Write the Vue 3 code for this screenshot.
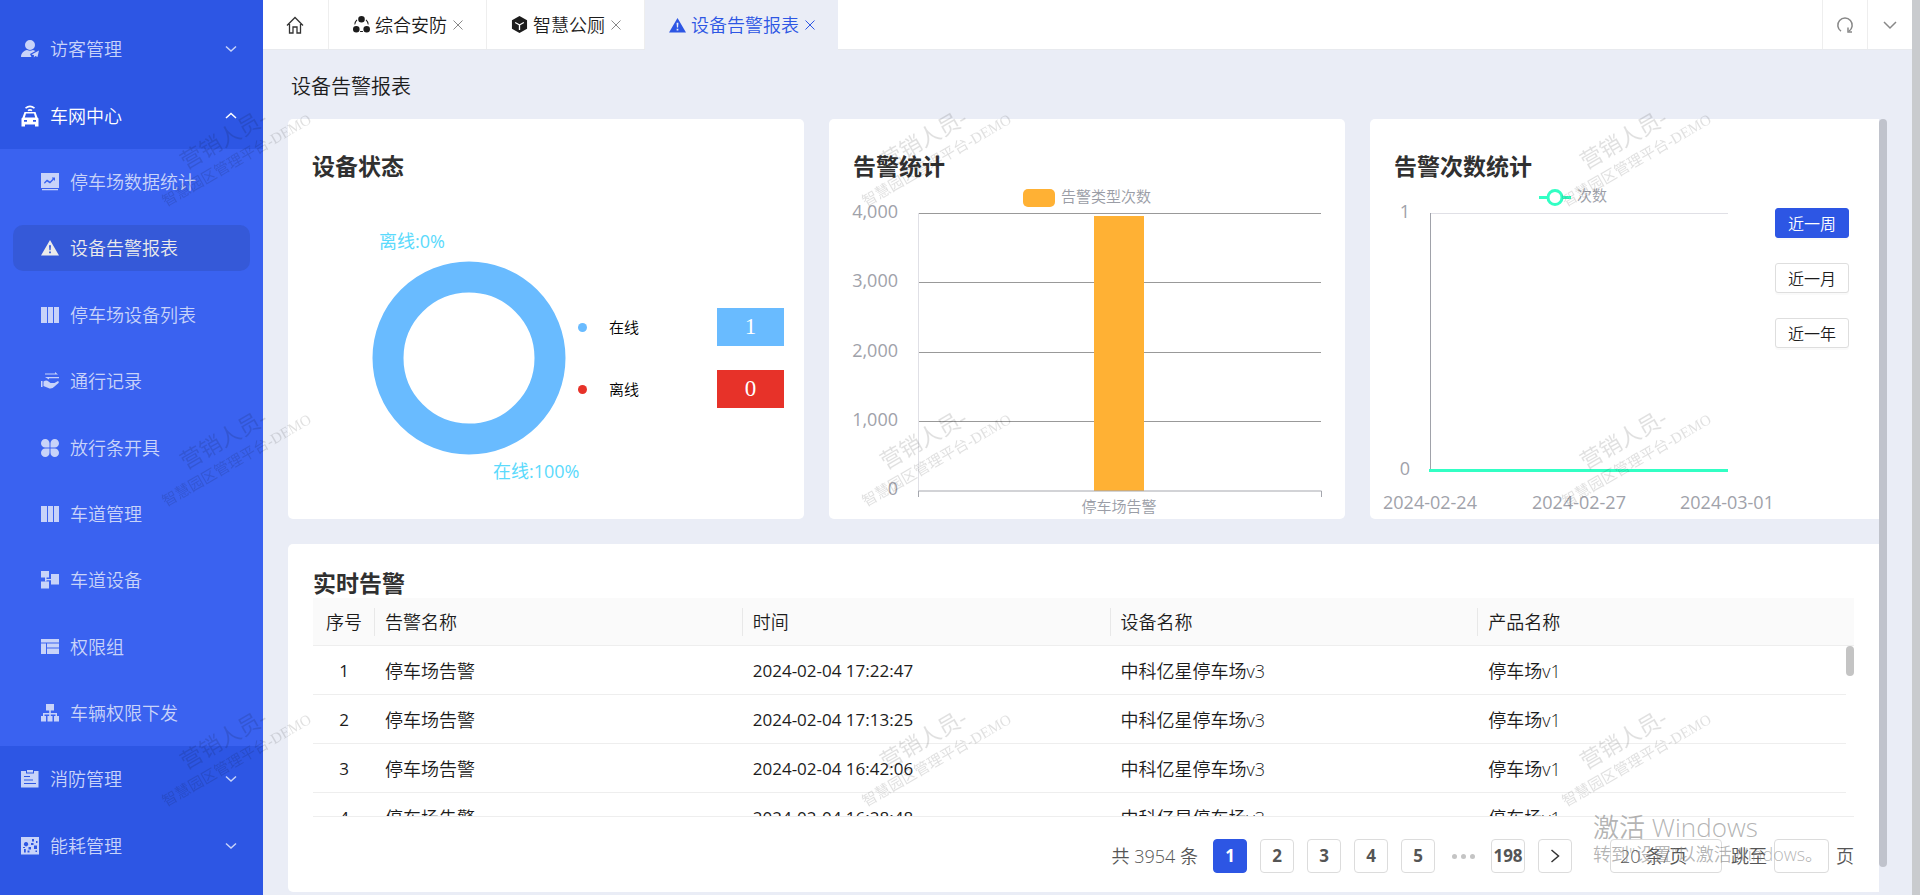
<script setup>
import { ref } from 'vue'

const icons = {
  visitor: 'M9 0a5 5 0 1 1 0 10a5 5 0 1 1 0-10z M0 17c0-4 3-6.500 6-7q3 1.500 6 0l2.500 1l-5.500 3l1.500 3z M18 10.500l-7.500 4l2.500.7l-.2 2.300l1.500-1.500l2.200 1z',
  car: 'M4 .5q5-4 10 0l-1 1.300q-4-3-8 0z M6.500 3q2.500-2 5 0l-1 1.300q-1.500-1.200-3 0z M3.500 5h11l2 5.500l1 1v8h-3.500v-2h-10v2h-3.500v-8l1-1z M5 6.500l-1.200 4h10.400l-1.200-4z M3 13v1.800h3v-1.800z M12 13v1.800h3v-1.800z',
  trend: 'M0 0h18v15h-18z M3 9.500l3-3l3 2l3-3h-1v-1h3v3h-1v-1l-4 4l-3-2l-2.300 2.200z M1 16h16v1.300h-16z',
  alert: 'M9 1l9 15.500h-18z M8 6.200h2l-.4 5h-1.200z M8.100 12.500h1.800v1.800h-1.800z',
  columns: 'M0 1h6v16h-6z M7 1h5v16h-5z M13 1h5v16h-5z',
  hand: 'M4 1.500h10v-1.500l3 2.500h-13z M5 5h13v1.200h-10v1.300l-4-2.500z M0 9h1.500v6h-1.500z M2.500 9.500q3-2 5 0l2 1.500h4l3.500-2q1.500 1 .5 2l-4 3.500q-2 2.500-5 2l-6-2.500z',
  clover: 'M4.250 0a4.250 4.250 0 0 1 4.250 4.250v4.250h-4.250a4.250 4.250 0 0 1 0-8.500z M13.750 0a4.250 4.250 0 0 1 0 8.500h-4.250v-4.250a4.250 4.250 0 0 1 4.250-4.250z M4.250 9.500h4.250v4.250a4.250 4.250 0 1 1-4.250-4.250z M9.500 9.500h4.250a4.250 4.250 0 1 1-4.250 4.250z',
  device: 'M0 0h8v6.500h-8z M10 3h8v10.500h-8z M0 10.500h8v7h-8z M4 6.500h1.500v1.500h4.500v1.300h-4.500v1.500h-1.500z',
  group: 'M0 1h18v3.500h-18z M0 5.500h5v10.500h-5z M6 5.500h12v4h-12z M6 10.500h12v5.500h-12z',
  tree: 'M5 0h8v6.500h-3.200v2.500h6.200v3h2v5.500h-5v-5.500h1.500v-1.500h-4.700v1.500h1.700v5.500h-5v-5.500h1.700v-1.500h-4.700v1.500h1.500v5.500h-5v-5.500h2v-3h6.200v-2.500h-3.200z',
  clipboard: 'M0 1h5v2.500h8v-2.500h4.500v16.500h-17.500z M6 0h6v2.500h-6z M3 6v1h6v-1z M3 9.500v1h9v-1z M3 13v1h12v-1z',
  energy: 'M0 0h18v17.500h-18z M5 5a2.200 2.200 0 1 0 .1 0z M11 2v2.500h2v-2.500z M15 4v2h1.500v-2z M10 6v2h2.500v-2z M13 8.500v3.500h3v-3.500z M7.500 10v2.500h2.500v-2.500z M3 12v3.500h1.800v-3.500z M6.500 13.500v2h2v-2z M2 10v1h2v-1z M14.500 13.500v1.500h1.500v-1.500z',
  trio: 'M9 0a3.500 3.500 0 1 1 0 7a3.500 3.500 0 1 1 0-7z M3.500 10.500a3.500 3.500 0 1 1 0 7a3.500 3.500 0 1 1 0-7z M14.500 10.500a3.500 3.500 0 1 1 0 7a3.500 3.500 0 1 1 0-7z M3.800 3.700l.8.700q-2 2-2.300 4.600h-.9q.3-3.500 2.400-5.300z M14.200 3.700l-.8.700q2 2 2.300 4.600h.9q-.3-3.500-2.400-5.300z M7.500 16h3v1h-3z',
  cube: 'M9 0l8 4.500v9l-8 4.500l-8-4.500v-9z M4.700 6.400l-.6 1.100l4.200 2.400v4.800h1.400v-4.800l4.200-2.400l-.6-1.100l-4.300 2.400z'
}

const menuTop = [{ icon: 'visitor', label: '访客管理' }]
const menuBottom = [
  { icon: 'clipboard', label: '消防管理' },
  { icon: 'energy', label: '能耗管理' }
]
const submenu = [
  { icon: 'trend', label: '停车场数据统计' },
  { icon: 'alert', label: '设备告警报表' },
  { icon: 'columns', label: '停车场设备列表' },
  { icon: 'hand', label: '通行记录' },
  { icon: 'clover', label: '放行条开具' },
  { icon: 'columns', label: '车道管理' },
  { icon: 'device', label: '车道设备' },
  { icon: 'group', label: '权限组' },
  { icon: 'tree', label: '车辆权限下发' }
]
const activeItem = ref('设备告警报表')

const tabs = [
  { icon: 'trio', label: '综合安防' },
  { icon: 'cube', label: '智慧公厕' },
  { icon: 'alert', label: '设备告警报表' }
]

const yTicks = [
  { label: '4,000', y: 32 },
  { label: '3,000', y: 101 },
  { label: '2,000', y: 171 },
  { label: '1,000', y: 240 }
]
const dates = [
  { label: '2024-02-24', x: 60 },
  { label: '2024-02-27', x: 209 },
  { label: '2024-03-01', x: 357 }
]

const ranges = ['近一周', '近一月', '近一年']
const range = ref('近一周')

const rows = [
  { id: 1, time: '2024-02-04 17:22:47' },
  { id: 2, time: '2024-02-04 17:13:25' },
  { id: 3, time: '2024-02-04 16:42:06' },
  { id: 4, time: '2024-02-04 16:28:48' }
]
const page = ref(1)
const pageSize = ref('20')
const jump = ref('')
</script>

<template>
  <div class="layout">
    <nav class="sidebar" aria-label="主菜单">
      <a v-for="m in menuTop" :key="m.label" href="#" class="menu-item">
        <svg class="icon" viewBox="0 0 18 18"><path :d="icons[m.icon]" fill-rule="evenodd" /></svg>
        <span>{{ m.label }}</span>
        <svg class="chevron" viewBox="0 0 12 8"><path d="M1 1.500l5 4.500l5-4.500" /></svg>
      </a>
      <a href="#" class="menu-item open">
        <svg class="icon" viewBox="0 0 18 18"><path :d="icons.car" fill-rule="evenodd" /></svg>
        <span>车网中心</span>
        <svg class="chevron" viewBox="0 0 12 8"><path d="M1 6l5-4.500l5 4.500" /></svg>
      </a>
      <div class="submenu">
        <div v-for="s in submenu" :key="s.label" class="sub-row">
          <a href="#" class="sub-item" :class="{ active: s.label === activeItem }" @click.prevent="activeItem = s.label">
            <svg class="icon" viewBox="0 0 18 18"><path :d="icons[s.icon]" fill-rule="evenodd" /></svg>
            <span>{{ s.label }}</span>
          </a>
        </div>
      </div>
      <a v-for="m in menuBottom" :key="m.label" href="#" class="menu-item">
        <svg class="icon" viewBox="0 0 18 18"><path :d="icons[m.icon]" fill-rule="evenodd" /></svg>
        <span>{{ m.label }}</span>
        <svg class="chevron" viewBox="0 0 12 8"><path d="M1 1.500l5 4.500l5-4.500" /></svg>
      </a>
    </nav>

    <div class="page">
      <header class="tabs">
        <a href="#" class="tab home" aria-label="首页">
          <svg class="line-icon" viewBox="0 0 18 18"><path d="M1 9.500l8-8l8 8M3.500 8v9h3.500v-6h4v6h3.500v-9" /></svg>
        </a>
        <div v-for="(t, i) in tabs" :key="t.label" class="tab" :class="{ current: i === 2 }">
          <svg class="icon tab-icon" viewBox="0 0 18 18"><path :d="icons[t.icon]" fill-rule="evenodd" /></svg>
          <a href="#">{{ t.label }}</a>
          <button type="button" class="close" aria-label="关闭">
            <svg viewBox="0 0 12 12"><path d="M1.500 1.500l9 9M10.500 1.500l-9 9" /></svg>
          </button>
        </div>
        <div class="tools">
          <button type="button" aria-label="刷新">
            <svg class="tool-icon" viewBox="0 0 18 18"><path d="M5 15.200a7.200 7.200 0 1 1 8 0" /><path d="M12 11.500v4.500h4" /></svg>
          </button>
          <button type="button" aria-label="更多">
            <svg class="tool-icon" viewBox="0 0 18 18"><path d="M3 6l6 6l6-6" /></svg>
          </button>
        </div>
      </header>

      <h1 class="page-title">设备告警报表</h1>

      <div class="scroll-area">
        <main class="content">
          <div class="cards">
            <section class="card">
              <h2>设备状态</h2>
              <div class="card-body">
                <svg class="donut" viewBox="0 0 290 338">
                  <circle cx="181" cy="177" r="81" fill="none" stroke="#69bbff" stroke-width="31" />
                  <text x="91" y="67" class="donut-label">离线:0%</text>
                  <text x="205" y="297" class="donut-label">在线:100%</text>
                </svg>
                <ul class="legend">
                  <li><i class="dot online"></i><span>在线</span><b class="online">1</b></li>
                  <li><i class="dot offline"></i><span>离线</span><b class="offline">0</b></li>
                </ul>
              </div>
            </section>

            <section class="card">
              <h2>告警统计</h2>
              <div class="card-body">
                <svg class="chart" viewBox="0 0 516 338">
                  <rect x="194" y="8" width="32" height="18" rx="5" fill="#ffb134" />
                  <text x="232" y="21" class="small-label">告警类型次数</text>
                  <path d="M89.500 32v278" stroke="#e0e0e6" />
                  <g v-for="t in yTicks" :key="t.label">
                    <path :d="`M90 ${t.y + 0.5}h402`" stroke="#999" />
                    <text x="69" :y="t.y + 5" class="axis-label" text-anchor="end">{{ t.label }}</text>
                  </g>
                  <text x="69" y="314" class="axis-label" text-anchor="end">0</text>
                  <rect x="265" y="35" width="50" height="275" fill="#ffb134" />
                  <path d="M89.500 316v-6h403v6" fill="none" stroke="#a5a7ae" />
                  <text x="290" y="331" class="small-label" text-anchor="middle">停车场告警</text>
                </svg>
              </div>
            </section>

            <section class="card">
              <h2>告警次数统计</h2>
              <div class="card-body">
                <svg class="chart" viewBox="0 0 405 338">
                  <path d="M60 32.500h298" stroke="#e0e0e6" />
                  <path d="M60.500 32v257" stroke="#a0a2aa" />
                  <path d="M59 289.500h299" stroke="#32ffc4" stroke-width="3" />
                  <path d="M169 16.500h32" stroke="#32ffc4" stroke-width="3" />
                  <circle cx="185" cy="16.500" r="7" fill="#fff" stroke="#32ffc4" stroke-width="3" />
                  <text x="207" y="20" class="small-label">次数</text>
                  <text x="40" y="37" class="axis-label" text-anchor="end">1</text>
                  <text x="40" y="294" class="axis-label" text-anchor="end">0</text>
                  <text v-for="d in dates" :key="d.label" :x="d.x" y="328" class="axis-label" text-anchor="middle">{{ d.label }}</text>
                </svg>
                <div class="ranges">
                  <button v-for="r in ranges" :key="r" type="button" :class="{ on: r === range }" @click="range = r">{{ r }}</button>
                </div>
              </div>
            </section>
          </div>

          <section class="card table-card">
            <h2>实时告警</h2>
            <div class="table-wrap">
              <table>
                <colgroup><col class="c-no" /><col /><col /><col /><col /><col class="c-gutter" /></colgroup>
                <thead>
                  <tr><th class="no">序号</th><th>告警名称</th><th>时间</th><th>设备名称</th><th class="last">产品名称</th><th class="last"></th></tr>
                </thead>
                <tbody>
                  <tr v-for="r in rows" :key="r.id">
                    <td class="no">{{ r.id }}</td>
                    <td>停车场告警</td>
                    <td class="time">{{ r.time }}</td>
                    <td>中科亿星停车场v3</td>
                    <td>停车场v1</td>
                  </tr>
                </tbody>
              </table>
              <div class="table-thumb"></div>
            </div>
            <div class="pagination">
              <span class="total">共 3954 条</span>
              <button v-for="n in 5" :key="n" type="button" :class="{ on: n === page }" @click="page = n">{{ n }}</button>
              <span class="dots"><i></i><i></i><i></i></span>
              <button type="button">198</button>
              <button type="button" aria-label="下一页">
                <svg class="next" viewBox="0 0 12 16"><path d="M2.500 2l7 6l-7 6" /></svg>
              </button>
              <select v-model="pageSize" class="size" aria-label="每页条数">
                <option value="20">20 条/页</option>
              </select>
              <label class="jump">跳至<input v-model="jump" type="text" />页</label>
            </div>
          </section>
        </main>
        <div class="scrollbar"><div class="thumb"></div></div>
      </div>
    </div>

    <div class="page-scrollbar"></div>

    <svg class="watermark" aria-hidden="true">
      <defs>
        <pattern id="mark" x="140" y="60" width="700" height="300" patternUnits="userSpaceOnUse">
          <text class="mark-name" transform="translate(46 110) rotate(-30)">营销人员-</text>
          <text class="mark-org" transform="translate(26 147) rotate(-30)">智慧园区管理平台-DEMO</text>
        </pattern>
      </defs>
      <rect width="100%" height="100%" fill="url(#mark)" />
    </svg>

    <div class="activation">
      <p class="big">激活 Windows</p>
      <p>转到"设置"以激活Windows。</p>
    </div>
  </div>
</template>

<style>
body {
  margin: 0;
  background: #eaedf6;
}
</style>

<style scoped>
.layout {
  position: relative;
  display: flex;
  min-height: 100vh;
  overflow: hidden;
  background: #eaedf6;
  color: #1c1c1c;
  font: 350 18px/24px "Open Sans", "Noto Sans CJK SC", sans-serif;
}
.layout * {
  box-sizing: border-box;
}
a {
  color: inherit;
  text-decoration: none;
}
button,
input,
select {
  font: inherit;
  color: inherit;
  margin: 0;
  padding: 0;
}
h1,
h2,
p,
ul {
  margin: 0;
  padding: 0;
}

.sidebar {
  flex: none;
  width: 263px;
  display: flex;
  flex-direction: column;
  padding: 16px 0;
  background: #2d56e4;
  color: #c8d3f9;
}
.menu-item {
  flex: 1;
  display: flex;
  align-items: center;
  padding: 0 26px 0 21px;
  gap: 11px;
}
.menu-item.open {
  color: #fff;
}
.icon {
  flex: none;
  width: 18px;
  height: 18px;
  fill: currentColor;
  overflow: visible;
}
.chevron {
  width: 12px;
  height: 8px;
  margin-left: auto;
  fill: none;
  stroke: currentColor;
  stroke-width: 1.5;
}
.submenu {
  flex: 9;
  display: flex;
  flex-direction: column;
  background: #3a62f0;
}
.sub-row {
  flex: 1;
  display: flex;
  align-items: center;
  padding: 0 13px;
}
.sub-item {
  flex: 1;
  display: flex;
  align-items: center;
  gap: 11px;
  height: 46px;
  padding-left: 28px;
  border-radius: 10px;
}
.sub-item.active {
  background: #3559d8;
  color: #ebebeb;
}

.page {
  flex: 1;
  min-width: 0;
}
.tabs {
  display: flex;
  height: 50px;
  background: #fff;
  border-bottom: 1px solid #e8eaee;
}
.tab {
  display: flex;
  align-items: center;
  gap: 5px;
  height: 49px;
  padding: 0 22px 0 24px;
  border-right: 1px solid #eee;
}
.tab.home {
  width: 66px;
  padding: 0 24px 0 23px;
}
.tab.current {
  height: 50px;
  background: #eaedf6;
  color: #2d56e4;
  border: 0;
}
.tab-icon {
  width: 17px;
  height: 17px;
}
.line-icon {
  width: 18px;
  height: 18px;
  fill: none;
  stroke: #333;
  stroke-width: 1.3;
}
.close {
  width: 12px;
  height: 12px;
  display: flex;
  border: 0;
  background: none;
  color: #888;
}
.current .close {
  color: inherit;
}
.close svg {
  width: 12px;
  height: 12px;
  fill: none;
  stroke: currentColor;
}
.tools {
  display: flex;
  margin-left: auto;
}
.tools button {
  width: 45px;
  border: 0;
  border-left: 1px solid #eee;
  background: none;
  display: flex;
  align-items: center;
  justify-content: center;
}
.tool-icon {
  width: 18px;
  height: 18px;
  fill: none;
  stroke: #888;
  stroke-width: 1.5;
}
.page-title {
  padding: 25px 28px 20px;
  font-size: 20px;
  line-height: 24px;
  font-weight: 350;
}

.scroll-area {
  display: flex;
  margin: 0 25px;
}
.content {
  flex: 1;
  min-width: 0;
  overflow: hidden;
  display: flex;
  flex-direction: column;
  gap: 25px;
}
.scrollbar {
  flex: none;
  width: 8px;
  display: flex;
  flex-direction: column;
  padding-bottom: 25px;
}
.thumb {
  flex: 1;
  border-radius: 4px;
  background: #c0c3cc;
}
.cards {
  display: grid;
  grid-template-columns: repeat(3, minmax(0, 1fr));
  gap: 25px;
  margin-right: -7px;
}
.card {
  padding-top: 32px;
  background: #fff;
  border-radius: 5px;
}
.card h2 {
  padding-left: 24px;
  font-size: 23px;
  line-height: 30px;
  font-weight: 700;
  color: #303030;
}
.card-body {
  display: flex;
  height: 338px;
}
.donut {
  flex: none;
  width: 290px;
  height: 338px;
  overflow: visible;
}
.donut-label {
  font-size: 18px;
  font-weight: 400;
  fill: #5bdafc;
}
.chart {
  flex: 1;
  min-width: 0;
  height: 338px;
  overflow: visible;
}
.axis-label {
  font-size: 18px;
  font-weight: 400;
  fill: #9fa2aa;
}
.small-label {
  font-size: 15px;
  fill: #9a9da6;
}
.legend {
  flex: 1;
  display: flex;
  flex-direction: column;
  justify-content: center;
  gap: 24px;
  padding: 16px 20px 0 0;
  list-style: none;
  font-size: 15px;
  color: #000;
}
.legend li {
  display: flex;
  align-items: center;
}
.legend .dot {
  width: 9px;
  height: 9px;
  margin-right: 22px;
  border-radius: 50%;
}
.legend b {
  width: 67px;
  margin-left: auto;
  color: #fff;
  text-align: center;
  font: 400 23px/38px "Liberation Serif", serif;
}
.legend .online {
  background: #69bbff;
}
.legend .offline {
  background: #e73229;
}
.ranges {
  display: flex;
  flex-direction: column;
  gap: 25px;
  padding: 27px 37px 0 0;
}
.ranges button {
  width: 74px;
  height: 30px;
  padding-top: 2px;
  border: 1px solid #dedede;
  border-radius: 3px;
  background: #fff;
  box-shadow: 0 2px 0 rgba(0, 0, 0, 0.02);
  font-size: 16px;
  line-height: 26px;
}
.ranges .on {
  background: #2d56e4;
  border-color: #2d56e4;
  color: #fff;
}

.table-card {
  padding: 24px 25px 19px;
  border-radius: 5px 0 0 5px;
}
.table-card h2 {
  padding-left: 0;
}
.table-wrap {
  position: relative;
  height: 219px;
  overflow: hidden;
  border-bottom: 1px solid #eee;
}
table {
  width: 100%;
  table-layout: fixed;
  border-collapse: separate;
  border-spacing: 0;
}
.c-no {
  width: 62px;
}
.c-gutter {
  width: 8px;
}
th,
td {
  height: 49px;
  padding: 1px 10px 0;
  border-bottom: 1px solid #eee;
  text-align: left;
  font-weight: 350;
  white-space: nowrap;
}
th {
  height: 48px;
  background: linear-gradient(#e8e8e8, #e8e8e8) right center / 1px 28px no-repeat #fafafa;
}
th.last {
  background: #fafafa;
  padding-right: 0;
}
th.last:last-child {
  padding: 0;
}
.no {
  text-align: center;
}
td.no,
td.time {
  font-size: 17px;
  font-weight: 400;
}
.table-thumb {
  position: absolute;
  top: 48px;
  right: 0;
  width: 8px;
  height: 30px;
  border-radius: 4px;
  background: #c4c4c4;
}

.pagination {
  display: flex;
  align-items: center;
  justify-content: flex-end;
  gap: 13px;
  margin-top: 22px;
  color: #555;
}
.total {
  margin-right: 2px;
}
.pagination button {
  width: 34px;
  height: 34px;
  display: flex;
  align-items: center;
  justify-content: center;
  border: 1px solid #dcdcdc;
  border-radius: 4px;
  background: #fff;
  font-size: 17px;
  font-weight: 700;
}
.pagination .on {
  background: #2d56e4;
  border-color: #2d56e4;
  color: #fff;
}
.dots {
  width: 30px;
  display: flex;
  justify-content: center;
  gap: 4px;
}
.dots i {
  width: 5px;
  height: 5px;
  border-radius: 50%;
  background: #c4c4c4;
}
.next {
  width: 12px;
  height: 16px;
  fill: none;
  stroke: #333;
  stroke-width: 1.5;
}
.size {
  width: 112px;
  height: 34px;
  margin: 0 -4px 0 25px;
  padding: 0 9px;
  appearance: none;
  border: 1px solid #dcdcdc;
  border-radius: 4px;
  background: #fff;
}
.jump {
  display: flex;
  align-items: center;
  gap: 7px;
}
.jump input {
  width: 55px;
  height: 34px;
  border: 1px solid #dcdcdc;
  border-radius: 4px;
  background: #fff;
}

.page-scrollbar {
  flex: none;
  width: 8px;
  background: #c9cbce;
}

.watermark {
  position: absolute;
  inset: 0;
  width: 100%;
  height: 100%;
  pointer-events: none;
}
.mark-name {
  font: 400 22px "Liberation Serif", "Noto Sans CJK SC", serif;
  fill: rgba(0, 0, 0, 0.12);
}
.mark-org {
  font: 400 15px "Liberation Serif", "Noto Sans CJK SC", serif;
  fill: rgba(0, 0, 0, 0.12);
}
.activation {
  position: absolute;
  right: 96px;
  bottom: 29px;
  pointer-events: none;
  width: 231px;
  white-space: nowrap;
  color: rgba(130, 130, 130, 0.6);
}
.activation .big {
  font-size: 26px;
  line-height: 30px;
}
</style>
